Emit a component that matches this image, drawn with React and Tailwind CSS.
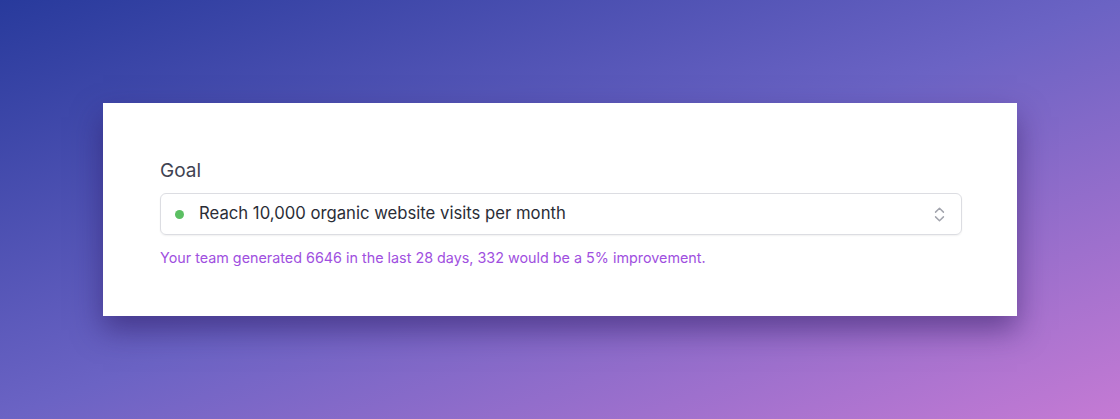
import { ChevronsUpDown } from "lucide-react";

export default function App() {
  return (
    <div className="w-[1120px] h-[419px] bg-[linear-gradient(to_bottom_right,#283a9c,#6b63c4_50%,#c57ad4)] flex items-start justify-center pt-[103px] font-['Inter',sans-serif]">
      <div className="w-[914px] h-[213px] bg-white shadow-[0_14px_28px_rgba(40,20,90,0.5)] pl-[57px] pr-[55px] pt-[56px]">
        <label className="block text-[19px] leading-[24px] text-[#3f4352]">Goal</label>
        <div className="mt-[10px] h-[42px] flex items-center rounded-[6px] border border-[#dcdde2] shadow-[0_1px_2px_rgba(0,0,0,0.06)] pl-[14px] pr-[12px]">
          <span className="w-[9px] h-[9px] rounded-full bg-[#5bbf62]" />
          <span className="ml-[15px] text-[16.7px] text-[#2a2d36] flex-1">
            Reach 10,000 organic website visits per month
          </span>
          <ChevronsUpDown className="w-[19px] h-[19px] text-[#a2a4ad]" strokeWidth={1.8} />
        </div>
        <p className="mt-[12px] text-[14.35px] text-[#a04fe0]">
          Your team generated 6646 in the last 28 days, 332 would be a 5% improvement.
        </p>
      </div>
    </div>
  );
}
